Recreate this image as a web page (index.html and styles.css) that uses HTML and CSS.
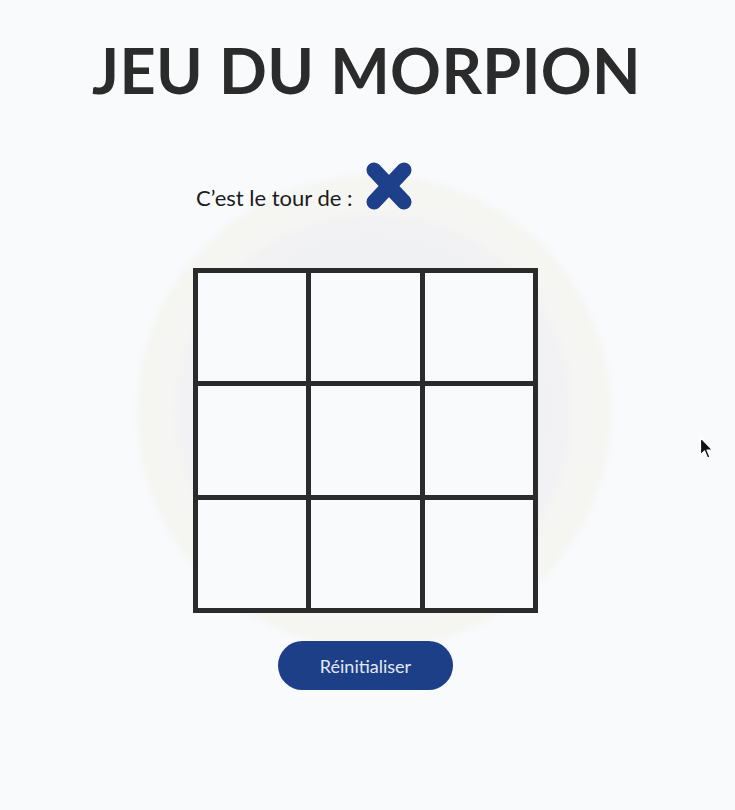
FILE: index.html
```html
<!DOCTYPE html>
<html lang="fr">
<head>
<meta charset="utf-8">
<title>Jeu du morpion</title>
<link rel="stylesheet" href="styles.css">
</head>
<body>
<main class="page">
  <h1 class="title">JEU DU MORPION</h1>
  <section class="stage">
    <div class="turn">
      <span class="turn-label">C’est le tour de :</span>
      <svg class="turn-icon" width="48" height="50" viewBox="0 0 48 50" aria-hidden="true">
        <line x1="9" y1="9" x2="39" y2="41" stroke="#1e3f8a" stroke-width="15" stroke-linecap="round"/>
        <line x1="39" y1="9" x2="9" y2="41" stroke="#1e3f8a" stroke-width="15" stroke-linecap="round"/>
      </svg>
    </div>
    <div class="board">
      <div class="cell"></div><div class="cell"></div><div class="cell"></div>
      <div class="cell"></div><div class="cell"></div><div class="cell"></div>
      <div class="cell"></div><div class="cell"></div><div class="cell"></div>
    </div>
    <button class="reset" type="button">Réinitialiser</button>
  </section>
  <svg class="cursor" width="16" height="24" viewBox="0 0 16 24" aria-hidden="true">
    <path d="M1.5 1.5 L1.5 19 L5.5 15 L8.5 22 L11 21 L8 14 L13.5 14 Z" fill="#111" stroke="#fff" stroke-width="1.2" stroke-linejoin="round"/>
  </svg>
</main>
</body>
</html>
```

FILE: styles.css
```css
* { box-sizing: border-box; }
html, body { margin: 0; padding: 0; }
body {
  background: #f9fafc;
  font-family: "Lato", "Noto Sans", sans-serif;
  color: #2b2b2b;
  width: 735px;
  height: 810px;
  overflow: hidden;
}
.page {
  position: relative;
  height: 810px;
  display: flex;
  flex-direction: column;
  align-items: center;
  background: radial-gradient(circle at 374px 412px,
    #f0f1f3 0px, #f0f1f3 160px, #f2f2f4 192px, #f5f5f3 204px,
    #f5f5f2 232px, #f9fafc 242px);
}
.title {
  margin: 31px 0 0 -2px;
  font-size: 63px;
  line-height: 78px;
  font-weight: 700;
  letter-spacing: 0.4px;
  color: #2b2b2b;
}
.stage {
  margin-top: 57px;
  margin-right: 4px;
  display: flex;
  flex-direction: column;
  align-items: center;
}
.turn {
  width: 345px;
  padding-left: 3px;
  display: flex;
  align-items: flex-end;
  gap: 12px;
  height: 50px;
}
.turn-label {
  font-size: 22px;
  color: #1c1c1c;
  line-height: 24px;
  padding-bottom: 6px;
}
.turn-icon { display: block; margin-bottom: 5px; }
.board {
  margin-top: 52px;
  width: 345px;
  height: 345px;
  background: #2b2b2b;
  padding: 5px;
  display: grid;
  grid-template-columns: repeat(3, 1fr);
  grid-template-rows: repeat(3, 1fr);
  gap: 5px;
}
.cell { background: #f9fafc; }
.reset {
  margin-top: 28px;
  width: 175px;
  height: 49px;
  border: none;
  border-radius: 25px;
  background: #1d3f87;
  color: #e3e8f2;
  font-family: "Lato", "Noto Sans", sans-serif;
  font-size: 18px;
  cursor: pointer;
}
.cursor {
  position: absolute;
  left: 699px;
  top: 436px;
}
```
